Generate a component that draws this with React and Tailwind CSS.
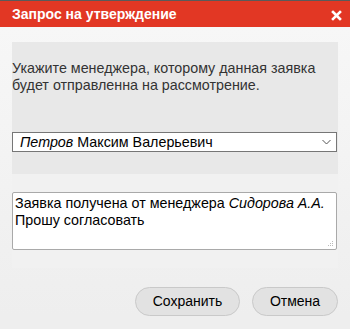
import React from 'react';

const App = () => {
  return (
    <div className="w-[350px] h-[329px] overflow-hidden bg-[#eeeeee] font-['Liberation_Sans',Arial,sans-serif] text-[14px]">
      <div className="h-px bg-[#5a5a5a]" />
      {/* Header */}
      <div className="h-[26px] bg-[#e23724] flex items-center justify-between pl-3 pr-[8px]">
        <span className="text-white font-bold text-[14px] leading-none">Запрос на утверждение</span>
        <svg width="11" height="11" viewBox="0 0 11 11" className="mt-[2px]">
          <path d="M2 2 L9 9 M9 2 L2 9" stroke="#ffffff" strokeWidth="2.6" strokeLinecap="square" />
        </svg>
      </div>

      {/* Body */}
      <div className="bg-gradient-to-b from-[#f7f7f7] to-[#eeeeee] px-3 pt-[15px]">
        <div className="bg-[#e8e8e8] pt-[18px] pb-[22px] h-[132px]">
          <p className="text-[#333333] text-[14.3px] leading-[17px]">
            Укажите менеджера, которому данная заявка будет отправленна на рассмотрение.
          </p>
          <div className="mt-[38px] mr-px h-[20px] bg-white border border-[#767676] flex items-center justify-between pl-[7px] pr-[5px] text-black">
            <span className="leading-none text-[14.3px]"><i>Петров</i> Максим Валерьевич</span>
            <svg width="9" height="6" viewBox="0 0 9 6">
              <path d="M0.5 1 L4.5 5 L8.5 1" fill="none" stroke="#555" strokeWidth="1" />
            </svg>
          </div>
        </div>

        <div className="bg-[#f1f1f1] pt-[18px] pb-[18px] h-[94px]">
          <div className="relative mr-px h-[58px] bg-white border border-[#a9a9a9] rounded-[2px] px-[2px] pt-[2px] text-[14.3px] leading-[17px] text-black">
            Заявка получена от менеджера <i>Сидорова А.А.</i>
            <br />
            Прошу согласовать
            <svg width="6" height="6" viewBox="0 0 6 6" className="absolute right-[2px] bottom-[2px]">
              <rect x="4" y="0" width="1" height="1" fill="#bbb" />
              <rect x="2" y="2" width="1" height="1" fill="#bbb" />
              <rect x="4" y="2" width="1" height="1" fill="#bbb" />
              <rect x="0" y="4" width="1" height="1" fill="#bbb" />
              <rect x="2" y="4" width="1" height="1" fill="#bbb" />
              <rect x="4" y="4" width="1" height="1" fill="#bbb" />
            </svg>
          </div>
        </div>

        <div className="flex justify-end gap-3 pt-[19px]">
          <button className="w-[105px] h-[29px] rounded-full border border-[#c9c9c9] bg-[#e2e2e2] text-black text-[14px]">
            Сохранить
          </button>
          <button className="w-[86px] h-[29px] rounded-full border border-[#c9c9c9] bg-[#e2e2e2] text-black text-[14px]">
            Отмена
          </button>
        </div>
      </div>
    </div>
  );
};

export default App;
